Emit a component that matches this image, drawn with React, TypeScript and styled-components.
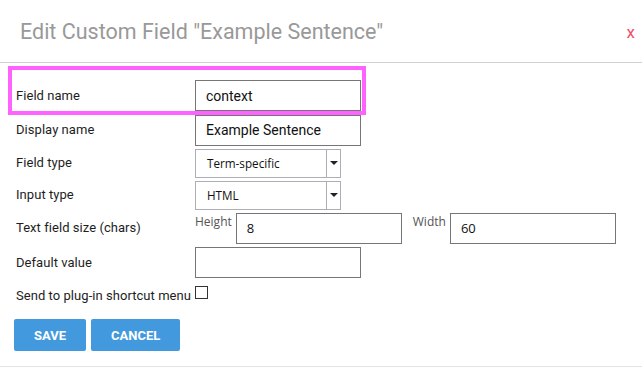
import React from "react";
import styled, { createGlobalStyle } from "styled-components";

const Global = createGlobalStyle`
  html, body { margin: 0; padding: 0; background: #fff; }
  body { font-family: Roboto, "Liberation Sans", Arial, sans-serif; }
  * { box-sizing: border-box; }
`;

const Dialog = styled.div`
  width: 642px;
  height: 367px;
  border-bottom: 1px solid #e4e4e4;
  display: flex;
  flex-direction: column;
`;

const Header = styled.header`
  height: 63px;
  flex: none;
  border-bottom: 1px solid #d0d0d0;
  display: flex;
  align-items: center;
  justify-content: space-between;
  padding: 0 7px 0 20px;
`;

const Title = styled.h1`
  margin: 0;
  font-family: Roboto, sans-serif;
  font-weight: 400;
  font-size: 21.5px;
  color: #999;
  letter-spacing: 0;
`;

const Close = styled.span`
  font-family: Roboto, sans-serif;
  font-size: 17px;
  color: #f0506a;
  line-height: 1;
  padding-top: 2px;
`;

const Form = styled.form`
  position: relative;
  padding: 15px 0 0 16px;
  flex: 1;
`;

const Highlight = styled.div`
  position: absolute;
  left: 8px;
  top: 3px;
  width: 358px;
  height: 49px;
  border: 4px solid #ff63ff;
  pointer-events: none;
`;

const Row = styled.div<{ $h: number }>`
  display: flex;
  align-items: center;
  height: ${(p) => p.$h}px;
`;

const CheckRow = styled.div`
  display: flex;
  align-items: flex-start;
  margin-top: 6px;
  height: 20px;
`;

const Label = styled.label<{ $lh?: number }>`
  width: 179px;
  flex: none;
  font-size: 13px;
  line-height: ${(p) => p.$lh ?? 16}px;
  color: #1e1e1e;
  white-space: nowrap;
  letter-spacing: 0.05px;
`;

const TextInput = styled.div`
  position: relative;
  width: 166px;
  height: 31px;
  border: 1px solid #767676;
  background: #fff;
  padding: 0 10px;
  display: flex;
  align-items: center;
  font-family: Roboto, sans-serif;
  font-size: 14px;
  color: #111;
`;

const SizeCell = styled.div`
  display: flex;
  align-items: flex-start;
`;

const SizeLabel = styled.span<{ $gapLeft?: number }>`
  font-family: "Open Sans", sans-serif;
  font-size: 12px;
  line-height: 16px;
  color: #555;
  padding-top: 1px;
  margin-left: ${(p) => p.$gapLeft ?? 0}px;
  margin-right: 4px;
`;

const SizeInput = styled.div`
  width: 166px;
  height: 31px;
  border: 1px solid #767676;
  padding: 0 10px;
  display: flex;
  align-items: center;
  font-family: "Open Sans", sans-serif;
  font-size: 13px;
  color: #111;
`;

const SelectBox = styled.div`
  width: 146px;
  height: 29px;
  border: 1px solid #adadb5;
  display: flex;
  background: #fff;
`;

const SelectValue = styled.span`
  flex: 1;
  display: flex;
  align-items: center;
  padding-left: 11px;
  font-family: "Open Sans", sans-serif;
  font-size: 11.7px;
  color: #111;
`;

const SelectArrow = styled.span`
  width: 14px;
  border-left: 1px solid #adadb5;
  display: flex;
  align-items: center;
  justify-content: center;
  &::after {
    content: "";
    border-left: 4px solid transparent;
    border-right: 4px solid transparent;
    border-top: 4px solid #222;
  }
`;

const Checkbox = styled.span`
  width: 13px;
  height: 13px;
  border: 1px solid #333;
  background: #fff;
`;

const Buttons = styled.div`
  display: flex;
  gap: 5px;
  margin-top: 13px;
  margin-left: -2px;
`;

const Button = styled.button`
  height: 32px;
  padding: 0 20px;
  border: none;
  border-radius: 2px;
  background: #4299dd;
  color: #fff;
  font-family: Roboto, sans-serif;
  font-weight: 700;
  font-size: 13px;
  text-transform: uppercase;
  cursor: pointer;
`;

const Select = ({ value }: { value: string }) => (
  <SelectBox>
    <SelectValue>{value}</SelectValue>
    <SelectArrow />
  </SelectBox>
);

export default function App() {
  return (
    <>
      <Global />
      <Dialog>
        <Header>
          <Title>Edit Custom Field "Example Sentence"</Title>
          <Close>x</Close>
        </Header>
        <Form onSubmit={(e) => e.preventDefault()}>
          <Highlight />
          <Row $h={35}>
            <Label>Field name</Label>
            <TextInput>context</TextInput>
          </Row>
          <Row $h={34}>
            <Label>Display name</Label>
            <TextInput>Example Sentence</TextInput>
          </Row>
          <Row $h={32}>
            <Label>Field type</Label>
            <Select value="Term-specific" />
          </Row>
          <Row $h={32}>
            <Label>Input type</Label>
            <Select value="HTML" />
          </Row>
          <Row $h={34}>
            <Label>Text field size (chars)</Label>
            <SizeCell>
              <SizeLabel>Height</SizeLabel>
              <SizeInput>8</SizeInput>
              <SizeLabel $gapLeft={11}>Width</SizeLabel>
              <SizeInput>60</SizeInput>
            </SizeCell>
          </Row>
          <Row $h={35}>
            <Label>Default value</Label>
            <TextInput />
          </Row>
          <CheckRow>
            <Label $lh={20}>Send to plug-in shortcut menu</Label>
            <Checkbox />
          </CheckRow>
          <Buttons>
            <Button type="submit">Save</Button>
            <Button type="button">Cancel</Button>
          </Buttons>
        </Form>
      </Dialog>
    </>
  );
}
